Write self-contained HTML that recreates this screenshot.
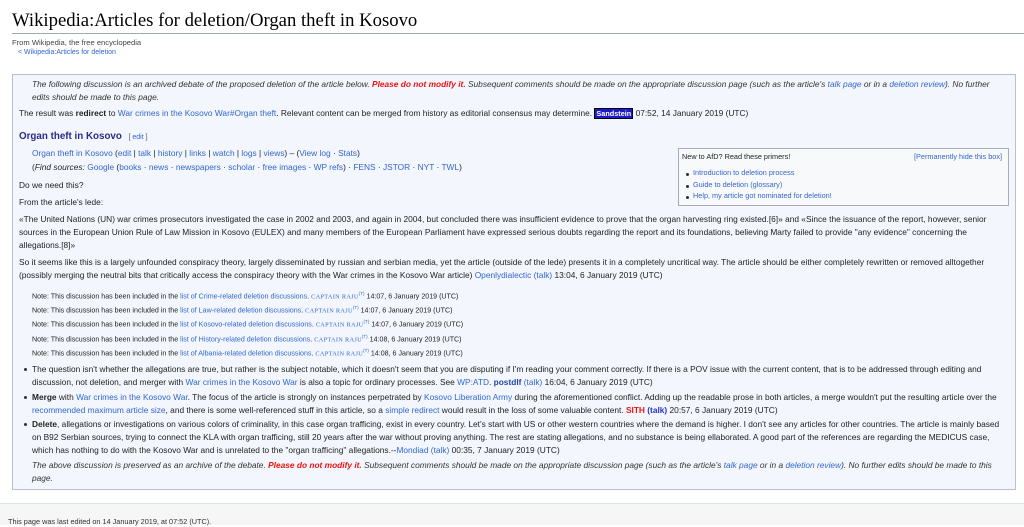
<!DOCTYPE html>
<html><head><meta charset="utf-8"><style>
body{margin:0;width:1024px;height:524px;overflow:hidden;background:#fff;font-family:"Liberation Sans",Arial,sans-serif;color:#222;position:relative}
.l{position:absolute;white-space:nowrap;font-size:8.35px;line-height:10px}
a,.a{color:#3366cc;text-decoration:none}
.r{color:#ee1111;font-weight:bold}
i{font-style:italic}
.s{font-size:7.1px}
.p{font-size:7.3px}
.cr{font-family:"Liberation Serif",serif;font-size:6.3px;color:#36c;letter-spacing:.3px}
.b{position:absolute;left:24px;width:3px;height:3px;border-radius:50%;background:#234}
</style></head><body>
<div style="position:absolute;left:12px;top:8px;font-family:'Liberation Serif',serif;font-size:18.7px;color:#000;line-height:26px">Wikipedia:Articles for deletion/Organ theft in Kosovo</div>
<div style="position:absolute;left:12px;right:0;top:33px;height:1px;background:#a2a9b1"></div>
<div class="l" style="left:12px;top:38px;color:#444;font-size:7.6px">From Wikipedia, the free encyclopedia</div>
<div class="l" style="left:18px;top:48px;font-size:7px"><a>&lt; Wikipedia:Articles for deletion</a></div>

<div style="position:absolute;left:12px;top:74px;width:1002px;height:414px;background:#f3f7fd;border:1px solid #b8c0cc"></div>

<div class="l" style="left:32px;top:79px"><i style="color:#333">The following discussion is an archived debate of the proposed deletion of the article below. <span class="r">Please do not modify it.</span> Subsequent comments should be made on the appropriate discussion page (such as the article's <a>talk page</a> or in a <a>deletion review</a>). No further</i></div>
<div class="l" style="left:32px;top:92px"><i style="color:#333">edits should be made to this page.</i></div>
<div class="l" style="left:19px;top:108px">The result was <b>redirect</b> to <a>War crimes in the Kosovo War#Organ theft</a>. Relevant content can be merged from history as editorial consensus may determine. <span style="background:#1a1acc;color:#fff;border:1px solid #000;padding:0 1px;font-weight:bold;font-size:7.3px">Sandstein</span> 07:52, 14 January 2019 (UTC)</div>
<div class="l" style="left:19px;top:131px;font-size:9.8px;line-height:12px;font-weight:bold;color:#2a2a8a">Organ theft in Kosovo <span style="font-weight:normal;font-size:7px;color:#555">&nbsp; [ <a>edit</a> ]</span></div>
<div class="l" style="left:32px;top:148px"><a>Organ theft in Kosovo</a> (<a>edit</a> | <a>talk</a> | <a>history</a> | <a>links</a> | <a>watch</a> | <a>logs</a> | <a>views</a>) – (<a>View log</a> · <a>Stats</a>)</div>
<div class="l" style="left:32px;top:162px">(<i>Find sources:</i> <a>Google</a> (<a>books</a> · <a>news</a> · <a>newspapers</a> · <a>scholar</a> · <a>free images</a> · <a>WP refs</a>) · <a>FENS</a> · <a>JSTOR</a> · <a>NYT</a> · <a>TWL</a>)</div>

<div style="position:absolute;left:678px;top:148px;width:329px;height:56px;background:#f8f9fa;border:1px solid #aab"></div>
<div class="l p" style="left:682px;top:152px">New to AfD? Read these primers!</div>
<div class="l p" style="left:914px;top:152px"><a>[Permanently hide this box]</a></div>
<div class="b" style="left:686px;top:173px"></div><div class="l p" style="left:693px;top:168px"><a>Introduction to deletion process</a></div>
<div class="b" style="left:686px;top:185px"></div><div class="l p" style="left:693px;top:180px"><a>Guide to deletion</a> <a>(glossary)</a></div>
<div class="b" style="left:686px;top:196px"></div><div class="l p" style="left:693px;top:191px"><a>Help, my article got nominated for deletion!</a></div>

<div class="l" style="left:19px;top:180px">Do we need this?</div>
<div class="l" style="left:19px;top:197px">From the article's lede:</div>
<div class="l" style="left:19px;top:214px">«The United Nations (UN) war crimes prosecutors investigated the case in 2002 and 2003, and again in 2004, but concluded there was insufficient evidence to prove that the organ harvesting ring existed.[6]» and «Since the issuance of the report, however, senior</div>
<div class="l" style="left:19px;top:227px">sources in the European Union Rule of Law Mission in Kosovo (EULEX) and many members of the European Parliament have expressed serious doubts regarding the report and its foundations, believing Marty failed to provide "any evidence" concerning the</div>
<div class="l" style="left:19px;top:240px">allegations.[8]»</div>
<div class="l" style="left:19px;top:257px">So it seems like this is a largely unfounded conspiracy theory, largely disseminated by russian and serbian media, yet the article (outside of the lede) presents it in a completely uncritical way. The article should be either completely rewritten or removed alltogether</div>
<div class="l" style="left:19px;top:270px">(possibly merging the neutral bits that critically access the conspiracy theory with the War crimes in the Kosovo War article) <a>Openlydialectic</a> <a>(talk)</a> 13:04, 6 January 2019 (UTC)</div>

<div class="l s" style="left:32px;top:289px">Note: This discussion has been included in the <a>list of Crime-related deletion discussions</a>. <span class="cr">CAPTAIN RAJU</span><sup class="a" style="font-size:4.5px">(T)</sup> 14:07, 6 January 2019 (UTC)</div>
<div class="l s" style="left:32px;top:303px">Note: This discussion has been included in the <a>list of Law-related deletion discussions</a>. <span class="cr">CAPTAIN RAJU</span><sup class="a" style="font-size:4.5px">(T)</sup> 14:07, 6 January 2019 (UTC)</div>
<div class="l s" style="left:32px;top:317px">Note: This discussion has been included in the <a>list of Kosovo-related deletion discussions</a>. <span class="cr">CAPTAIN RAJU</span><sup class="a" style="font-size:4.5px">(T)</sup> 14:07, 6 January 2019 (UTC)</div>
<div class="l s" style="left:32px;top:332px">Note: This discussion has been included in the <a>list of History-related deletion discussions</a>. <span class="cr">CAPTAIN RAJU</span><sup class="a" style="font-size:4.5px">(T)</sup> 14:08, 6 January 2019 (UTC)</div>
<div class="l s" style="left:32px;top:346px">Note: This discussion has been included in the <a>list of Albania-related deletion discussions</a>. <span class="cr">CAPTAIN RAJU</span><sup class="a" style="font-size:4.5px">(T)</sup> 14:08, 6 January 2019 (UTC)</div>

<div class="b" style="top:368px"></div>
<div class="l" style="left:32px;top:364px">The question isn't whether the allegations are true, but rather is the subject notable, which it doesn't seem that you are disputing if I'm reading your comment correctly. If there is a POV issue with the current content, that is to be addressed through editing and</div>
<div class="l" style="left:32px;top:377px">discussion, not deletion, and merger with <a>War crimes in the Kosovo War</a> is also a topic for ordinary processes. See <a>WP:ATD</a>. <b class="a" style="color:#2244aa">postdlf</b> <a>(talk)</a> 16:04, 6 January 2019 (UTC)</div>
<div class="b" style="top:396px"></div>
<div class="l" style="left:32px;top:392px"><b>Merge</b> with <a>War crimes in the Kosovo War</a>. The focus of the article is strongly on instances perpetrated by <a>Kosovo Liberation Army</a> during the aforementioned conflict. Adding up the readable prose in both articles, a merge wouldn't put the resulting article over the</div>
<div class="l" style="left:32px;top:405px"><a>recommended maximum article size</a>, and there is some well-referenced stuff in this article, so a <a>simple redirect</a> would result in the loss of some valuable content. <span class="r">SITH</span> <b style="color:#2233cc">(talk)</b> 20:57, 6 January 2019 (UTC)</div>
<div class="b" style="top:423px"></div>
<div class="l" style="left:32px;top:419px"><b>Delete</b>, allegations or investigations on various colors of criminality, in this case organ trafficing, exist in every country. Let's start with US or other western countries where the demand is higher. I don't see any articles for other countries. The article is mainly based</div>
<div class="l" style="left:32px;top:432px">on B92 Serbian sources, trying to connect the KLA with organ trafficing, still 20 years after the war without proving anything. The rest are stating allegations, and no substance is being ellaborated. A good part of the references are regarding the MEDICUS case,</div>
<div class="l" style="left:32px;top:445px">which has nothing to do with the Kosovo War and is unrelated to the "organ trafficing" allegations.--<a>Mondiad</a> <a>(talk)</a> 00:35, 7 January 2019 (UTC)</div>
<div class="l" style="left:32px;top:460px"><i style="color:#333">The above discussion is preserved as an archive of the debate. <span class="r">Please do not modify it.</span> Subsequent comments should be made on the appropriate discussion page (such as the article's <a>talk page</a> or in a <a>deletion review</a>). No further edits should be made to this</i></div>
<div class="l" style="left:32px;top:473px"><i style="color:#333">page.</i></div>

<div style="position:absolute;left:0;right:0;top:503px;height:21px;background:#f6f6f6;border-top:1px solid #d8e4f0"></div>
<div class="l" style="left:8px;top:517px;color:#333;font-size:7.3px">This page was last edited on 14 January 2019, at 07:52 (UTC).</div>
</body></html>
